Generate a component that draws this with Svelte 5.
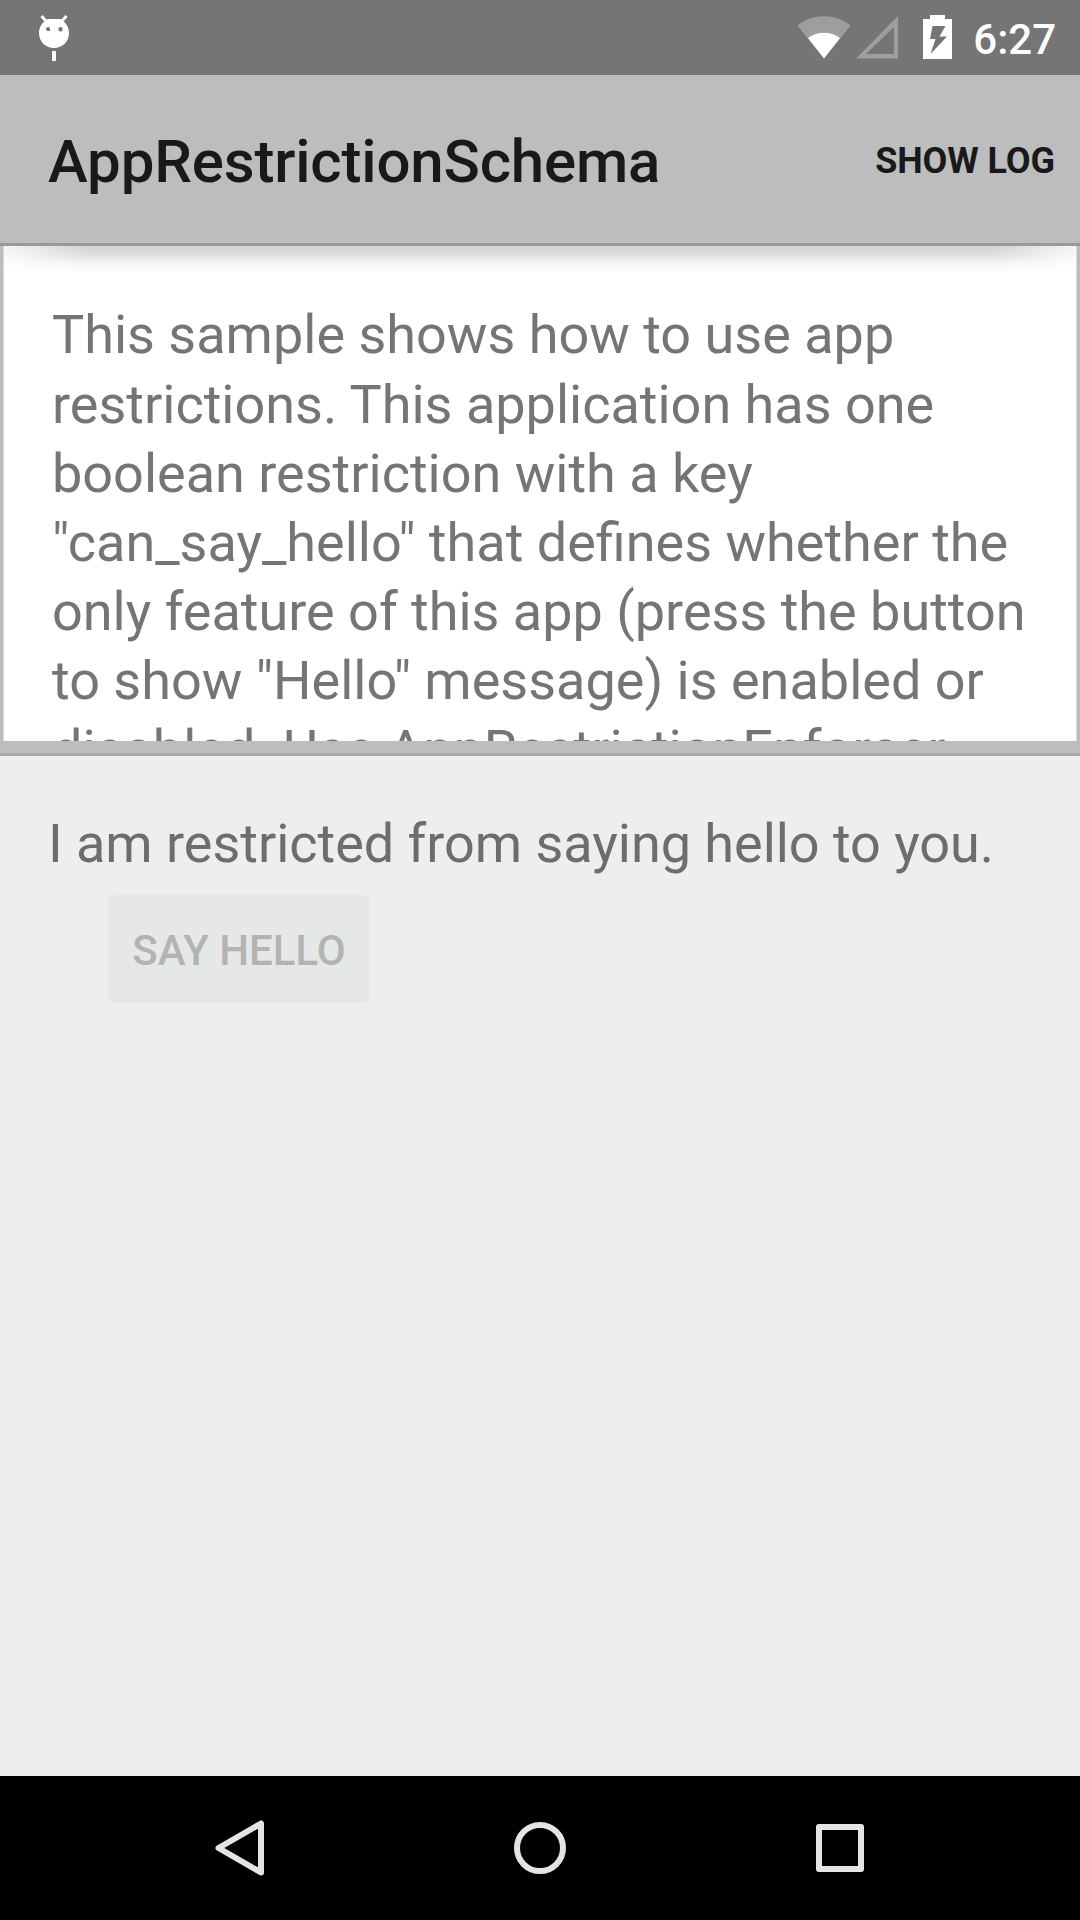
<script>
  const intro = [
    'This sample shows how to use app',
    'restrictions. This application has one',
    'boolean restriction with a key',
    '"can_say_hello" that defines whether the',
    'only feature of this app (press the button',
    'to show "Hello" message) is enabled or',
    'disabled. Use AppRestrictionEnforcer'
  ];
</script>

<div class="screen">
  <header class="status">
    <svg class="debug" width="34" height="48" viewBox="0 0 34 48">
      <path d="M4.500 2 L9 7 M29.500 2 L25 7" stroke="#fff" stroke-width="3" />
      <path fill="#fff" fill-rule="evenodd" d="M11 5H23C28.500 7.500 32 13 32 19C32 27.500 25.500 34 17 34S2 27.500 2 19C2 13 5.500 7.500 11 5ZM11 13a2 2 0 1 0 0 4h2v-2a2 2 0 0 0-2-2ZM23.500 13a2.200 2.200 0 1 0 0 4.400a2.200 2.200 0 0 0 0-4.400Z" />
      <path d="M15 37H19V47H15Z" fill="#fff" />
    </svg>
    <div class="indicators">
      <svg class="wifi" width="54" height="44" viewBox="0 0 54 44">
        <path d="M0.300 10.500C16-2 38-2 53.700 10.500L27 43.500Z" fill="#9e9e9e" />
        <path d="M11 23C20 16 34 16 43 23L27 43.500Z" fill="#fff" />
      </svg>
      <svg class="cell" width="43" height="44" viewBox="0 0 43 44">
        <path fill="#9e9e9e" fill-rule="evenodd" d="M0 43.500L42 1V43.500ZM10 39H38V12Z" />
      </svg>
      <svg class="battery" width="29" height="44" viewBox="0 0 29 44">
        <path fill="#fff" fill-rule="evenodd" d="M7 0H22V4H29V44H0V4H7ZM9.500 11L7 24H12.500L7.500 39L24 21.500H16.500L22.500 11Z" />
      </svg>
      <span class="clock">6:27</span>
    </div>
  </header>

  <div class="appbar">
    <h1>AppRestrictionSchema</h1>
    <button class="action">SHOW LOG</button>
  </div>

  <section class="intro">
    <div class="paper">
      {#each intro as line}
        <p>{line}</p>
      {/each}
    </div>
  </section>

  <main>
    <p class="message">I am restricted from saying hello to you.</p>
    <button class="hello" disabled>SAY HELLO</button>
  </main>

  <nav>
    <svg width="900" height="144" viewBox="0 0 900 144" fill="none" stroke="#e4e4e4" stroke-width="6" stroke-linejoin="round">
      <path d="M128.500 72L171 47.500V96.500Z" />
      <circle cx="450" cy="72" r="23" />
      <rect x="729" y="51" width="42" height="42" />
    </svg>
  </nav>
</div>

<style>
  :global(body) { margin: 0; background: #eee; }
  .screen {
    width: 1080px;
    height: 1920px;
    display: flex;
    flex-direction: column;
    overflow: hidden;
    background: #eee;
    font-family: Roboto, sans-serif;
    color: #757575;
  }
  p, h1 { margin: 0; white-space: nowrap; }
  button { border: 0; padding: 0; font-family: inherit; font-weight: 500; }
  .status {
    box-sizing: border-box;
    flex: 0 0 75px;
    display: flex;
    justify-content: space-between;
    align-items: flex-start;
    padding: 14px 24px 0 37px;
    background: #757575;
  }
  .indicators { display: flex; align-items: flex-start; }
  .wifi { margin-top: 1px; }
  .cell { margin: 1px 0 0 5px; }
  .battery { margin: 1px 21px 0 24px; }
  .clock { font-size: 42px; line-height: 50px; padding-top: 1px; font-weight: 500; color: #fff; }
  .appbar {
    box-sizing: border-box;
    flex: 0 0 168px;
    display: flex;
    align-items: center;
    justify-content: space-between;
    padding: 5px 24px 0 48px;
    background: #bdbdbd;
  }
  h1 {
    padding-top: 1px;
    font-size: 60px;
    line-height: 72px;
    font-weight: 500;
    letter-spacing: -0.18px;
    color: #191919;
  }
  .action { padding: 0 1px 2px 0; font-size: 36px; font-weight: 700; letter-spacing: -0.1px; background: none; color: #191919; }
  .intro {
    box-sizing: border-box;
    flex: 0 0 513px;
    padding: 0 3px 12px;
    background: #bdbdbd;
    border-top: 3px solid #999;
    border-bottom: 3px solid #a8a8a8;
  }
  .paper {
    box-sizing: border-box;
    height: 495px;
    padding: 54px 48px 0;
    overflow: hidden;
    border: solid #dcdcdc;
    border-width: 0 1px;
    background:
      linear-gradient(90deg, #fffc, #fff0 80px, #fff0 992px, #fffc),
      linear-gradient(#d2d2d2, #e0e0e0 9px, #f4f4f4 17px, #fff 27px);
  }
  .paper p { font-size: 54px; line-height: 69px; }
  .paper p:first-child { margin-bottom: 1px; }
  main { flex: 1; padding: 53px 48px 0; }
  .message { font-size: 54px; line-height: 69px; letter-spacing: -0.03px; color: #6d6d6d; }
  .hello {
    display: block;
    width: 262px;
    height: 108px;
    margin: 17px 0 0 60px;
    padding-top: 2px;
    border-radius: 6px;
    background: #e6e8e7;
    color: #b2b4b3;
    font-size: 42px;
  }
  nav { flex: 0 0 144px; display: flex; justify-content: center; background: #000; }
</style>
